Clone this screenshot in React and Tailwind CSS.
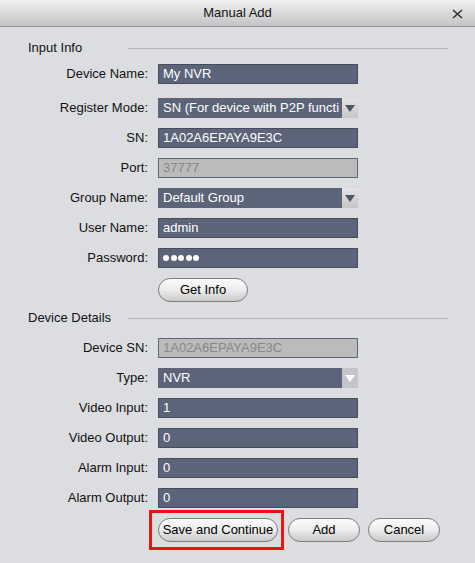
const field = "h-[20px] w-[200px] border border-[#454c5c] bg-[#5b6478] px-[4px] text-white leading-[18px] whitespace-nowrap overflow-hidden";
const disabledField = "h-[20px] w-[200px] border border-[#5f6675] bg-[#bbbbbb] px-[4px] text-[#888888] leading-[18px] whitespace-nowrap overflow-hidden";
const btn = "h-[24px] rounded-full border border-[#7d7d7d] bg-gradient-to-b from-[#fbfbfb] via-[#ececec] to-[#c9c9c9] text-black leading-[22px] text-center whitespace-nowrap";

function Row({ label, children, className = "" }) {
  return (
    <div className={`flex items-center ${className}`}>
      <div className="w-[158px] shrink-0 pr-[10px] text-right text-[#111]">{label}</div>
      {children}
    </div>
  );
}

function Select({ value, disabled }) {
  return (
    <div className="flex h-[20px] w-[200px] bg-[#5b6478]">
      <div className="flex-1 overflow-hidden whitespace-nowrap px-[5px] leading-[20px] text-white">{value}</div>
      <div
        className={`flex w-[16px] items-center justify-center ${
          disabled ? "bg-[#c4c5c8]" : "bg-gradient-to-b from-[#e4e4e4] to-[#c6c6c6]"
        }`}
      >
        <svg width="10" height="7" viewBox="0 0 10 7">
          <path d="M0 0H10L5 7Z" fill={disabled ? "#ffffff" : "#4f5666"} />
        </svg>
      </div>
    </div>
  );
}

function Section({ title }) {
  return (
    <div className="flex h-[16px] items-center">
      <div className="w-[128px] shrink-0 whitespace-nowrap pl-[28px] text-[#111]">{title}</div>
      <div className="h-px w-[320px] bg-[#b4b4b6]" />
    </div>
  );
}

export default function App() {
  return (
    <div
      className="h-[563px] w-[475px] overflow-hidden bg-[#dcdde1] text-[13px]"
      style={{ fontFamily: '"Liberation Sans", Arial, sans-serif' }}
    >
      <div className="relative flex h-[27px] items-center justify-center border-b border-[#8e8f92] bg-gradient-to-b from-[#f1f1f1] to-[#c3c4c6] text-[#111]">
        Manual Add
        <svg className="absolute right-[12px] top-[9px]" width="11" height="10" viewBox="0 0 11 10">
          <path d="M1 1L10 9M10 1L1 9" stroke="#333" strokeWidth="1.6" />
        </svg>
      </div>

      <div className="flex flex-col pt-[13px]">
        <Section title="Input Info" />
        <Row label="Device Name:" className="mt-[8px]">
          <div className={field}>My NVR</div>
        </Row>
        <Row label="Register Mode:" className="mt-[14px]">
          <Select value="SN (For device with P2P functi" />
        </Row>
        <Row label="SN:" className="mt-[10px]">
          <div className={field}>1A02A6EPAYA9E3C</div>
        </Row>
        <Row label="Port:" className="mt-[10px]">
          <div className={disabledField}>37777</div>
        </Row>
        <Row label="Group Name:" className="mt-[10px]">
          <Select value="Default Group" />
        </Row>
        <Row label="User Name:" className="mt-[10px]">
          <div className={field}>admin</div>
        </Row>
        <Row label="Password:" className="mt-[10px]">
          <div className={`${field} flex items-center gap-[1.5px]`}>
            {[0, 1, 2, 3, 4].map((i) => (
              <span key={i} className="h-[6px] w-[6px] rounded-full bg-white" />
            ))}
          </div>
        </Row>
        <Row label="" className="mt-[10px]">
          <div className={`${btn} w-[90px]`}>Get Info</div>
        </Row>

        <div className="mt-[8px]">
          <Section title="Device Details" />
        </div>
        <Row label="Device SN:" className="mt-[12px]">
          <div className={disabledField}>1A02A6EPAYA9E3C</div>
        </Row>
        <Row label="Type:" className="mt-[10px]">
          <Select value="NVR" disabled />
        </Row>
        <Row label="Video Input:" className="mt-[10px]">
          <div className={field}>1</div>
        </Row>
        <Row label="Video Output:" className="mt-[10px]">
          <div className={field}>0</div>
        </Row>
        <Row label="Alarm Input:" className="mt-[10px]">
          <div className={field}>0</div>
        </Row>
        <Row label="Alarm Output:" className="mt-[10px]">
          <div className={field}>0</div>
        </Row>

        <div className="mt-[2px] flex items-center pl-[149px]">
          <div className="border-[3px] border-[#ee1111] py-[5px] pl-[6px] pr-[3px]">
            <div className={`${btn} w-[120px]`}>Save and Continue</div>
          </div>
          <div className={`${btn} ml-[4px] w-[72px]`}>Add</div>
          <div className={`${btn} ml-[8px] w-[72px]`}>Cancel</div>
        </div>
      </div>
    </div>
  );
}
